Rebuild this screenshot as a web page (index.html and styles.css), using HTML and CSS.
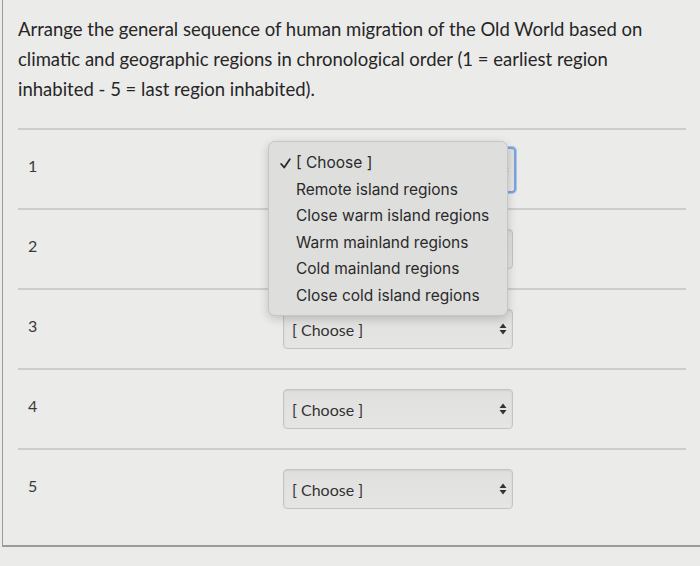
FILE: index.html
```html
<!DOCTYPE html>
<html>
<head>
<meta charset="utf-8">
<link rel="stylesheet" href="styles.css">
</head>
<body>
<div class="card">
  <p class="question">Arrange the general sequence of human migration of the Old World based on climatic and geographic regions in chronological order (1 = earliest region inhabited - 5 = last region inhabited).</p>
  <div class="rows">
    <div class="row">
      <span class="num">1</span>
      <div class="select focused"><span>[ Choose ]</span><svg class="arrows" width="8" height="12" viewBox="0 0 8 12"><path d="M4 0.5 L7.5 5 L0.5 5 Z M4 11.5 L7.5 7 L0.5 7 Z" fill="#333"/></svg></div>
    </div>
    <div class="row">
      <span class="num">2</span>
      <div class="select"><span>[ Choose ]</span><svg class="arrows" width="8" height="12" viewBox="0 0 8 12"><path d="M4 0.5 L7.5 5 L0.5 5 Z M4 11.5 L7.5 7 L0.5 7 Z" fill="#333"/></svg></div>
    </div>
    <div class="row">
      <span class="num">3</span>
      <div class="select"><span>[ Choose ]</span><svg class="arrows" width="8" height="12" viewBox="0 0 8 12"><path d="M4 0.5 L7.5 5 L0.5 5 Z M4 11.5 L7.5 7 L0.5 7 Z" fill="#333"/></svg></div>
    </div>
    <div class="row">
      <span class="num">4</span>
      <div class="select"><span>[ Choose ]</span><svg class="arrows" width="8" height="12" viewBox="0 0 8 12"><path d="M4 0.5 L7.5 5 L0.5 5 Z M4 11.5 L7.5 7 L0.5 7 Z" fill="#333"/></svg></div>
    </div>
    <div class="row">
      <span class="num">5</span>
      <div class="select"><span>[ Choose ]</span><svg class="arrows" width="8" height="12" viewBox="0 0 8 12"><path d="M4 0.5 L7.5 5 L0.5 5 Z M4 11.5 L7.5 7 L0.5 7 Z" fill="#333"/></svg></div>
    </div>
    <ul class="menu">
      <li class="checked"><svg class="check" width="11" height="11" viewBox="0 0 11 11"><path d="M1.2 6 L4.2 9.5 L9.8 1.2" fill="none" stroke="#2a2a2a" stroke-width="1.8" stroke-linecap="round" stroke-linejoin="round"/></svg>[ Choose ]</li>
      <li>Remote island regions</li>
      <li>Close warm island regions</li>
      <li>Warm mainland regions</li>
      <li>Cold mainland regions</li>
      <li>Close cold island regions</li>
    </ul>
  </div>
</div>
</body>
</html>
```
FILE: styles.css
```css
html, body {
  margin: 0;
  padding: 0;
  background: #ebebea;
  overflow: hidden;
}
body {
  width: 700px;
  height: 566px;
}
.card {
  margin-left: 2px;
  border-left: 1px solid #9b9b9b;
  border-bottom: 2px solid #9b9b9b;
  height: 547px;
  box-sizing: border-box;
}
.question {
  margin: 0;
  padding: 14px 0 0 15px;
  width: 660px;
  font-family: Lato, "Liberation Sans", sans-serif;
  font-size: 18.5px;
  line-height: 30px;
  color: #262626;
}
.rows {
  position: relative;
  margin: 24px 0 0 15px;
  width: 668px;
}
.row {
  display: flex;
  align-items: flex-start;
  border-top: 2px solid #cdcdcc;
  height: 80px;
  padding-top: 19px;
  box-sizing: border-box;
}
.num {
  width: 265px;
  padding-left: 10px;
  margin-top: 5px;
  font-family: Lato, "Liberation Sans", sans-serif;
  font-size: 16px;
  line-height: 24px;
  color: #3a3a3a;
  box-sizing: border-box;
}
.select {
  width: 230px;
  height: 40px;
  box-sizing: border-box;
  border: 1px solid #c4c4c3;
  border-radius: 4px;
  background: linear-gradient(#e0e0df, #e5e5e4);
  box-shadow: inset 0 1px 2px rgba(0,0,0,0.08);
  display: flex;
  align-items: center;
  justify-content: space-between;
  padding: 0 5px 0 8px;
  font-family: Lato, "Liberation Sans", sans-serif;
  font-size: 16px;
  color: #333;
}
.select.focused {
  margin-top: -2px;
  border: 2px solid #7ba2db;
  box-shadow: 0 0 0 1px #a9c3ea;
  width: 233px;
  height: 46px;
}
.menu {
  position: absolute;
  top: 13px;
  left: 250px;
  width: 240px;
  margin: 0;
  padding: 8px 0 5px 0;
  list-style: none;
  box-sizing: border-box;
  background: #dededd;
  border: 1px solid #c6c6c5;
  border-radius: 7px;
  box-shadow: 0 3px 10px rgba(0,0,0,0.18);
  font-family: Inter, "Noto Sans", sans-serif;
  font-size: 15.5px;
  color: #2a2a2a;
}
.menu li {
  height: 26.6px;
  line-height: 26.6px;
  padding-left: 27px;
  position: relative;
  white-space: nowrap;
}
.check {
  position: absolute;
  left: 11px;
  top: 8px;
}
```
